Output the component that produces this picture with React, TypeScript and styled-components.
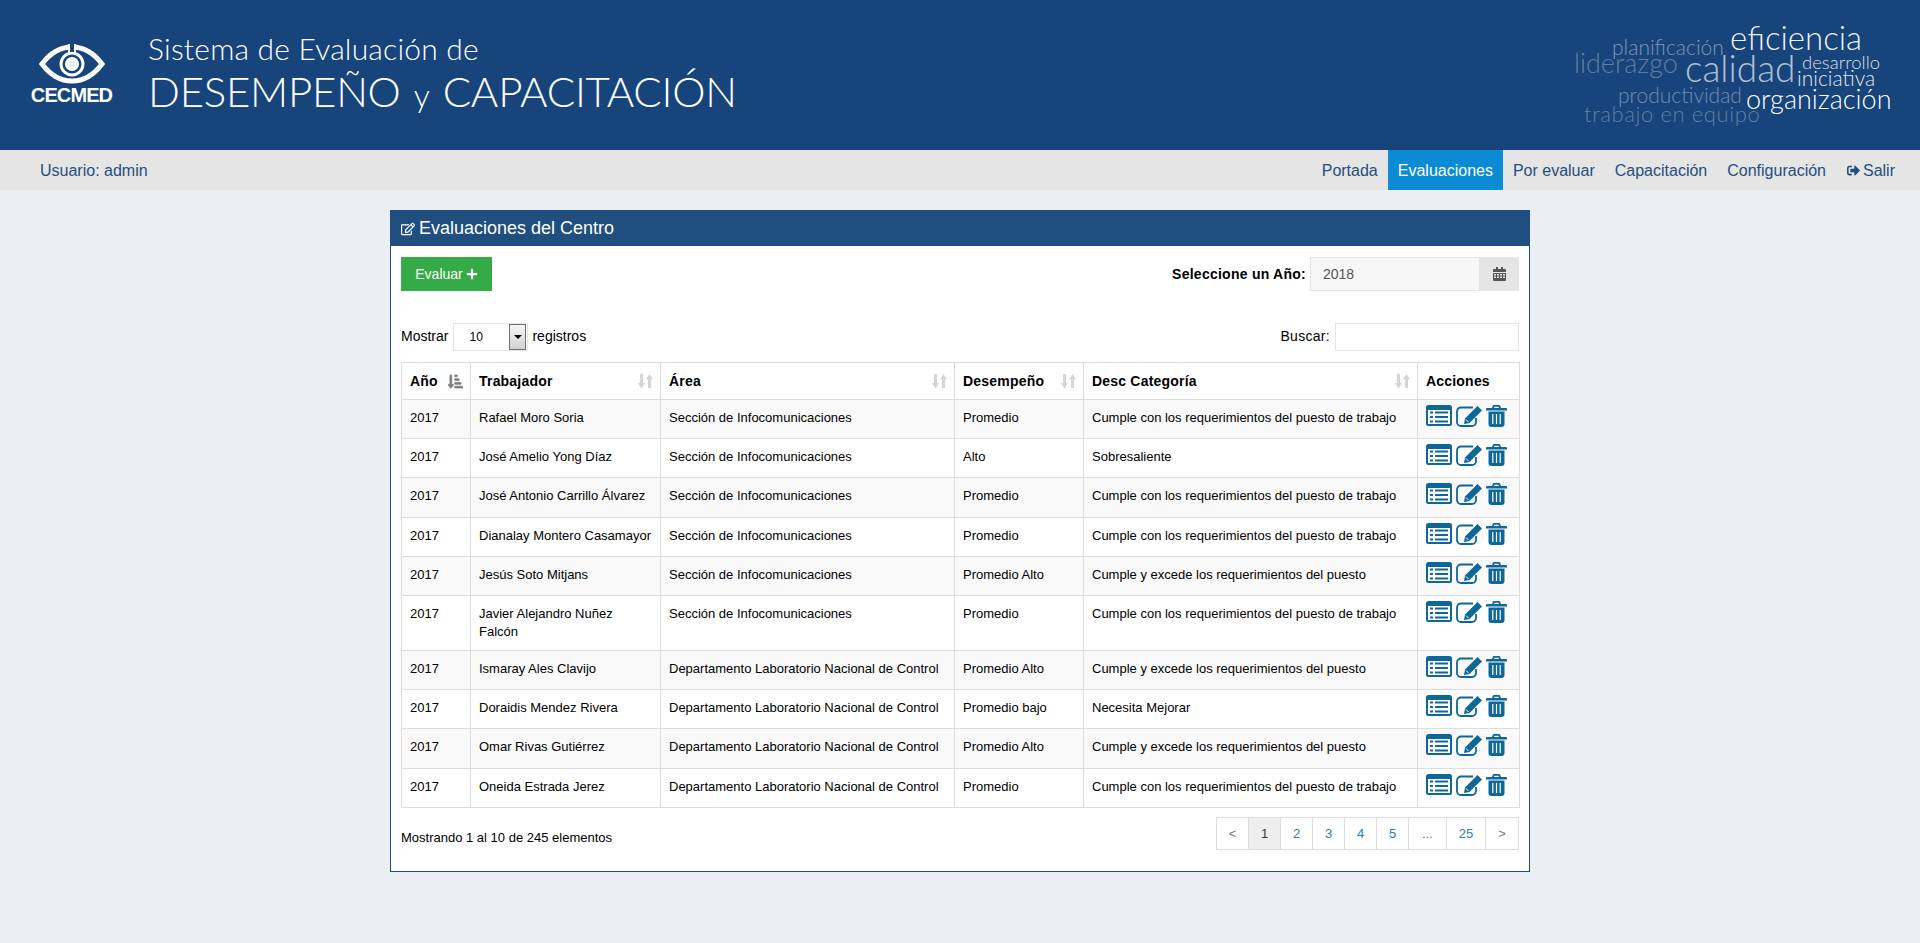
import React from "react";
import styled, { createGlobalStyle } from "styled-components";
import { FaPlus, FaRegEdit, FaSignOutAlt, FaSortAmountDownAlt } from "react-icons/fa";

const GlobalStyle = createGlobalStyle`
  html, body { margin: 0; padding: 0; }
  body {
    background: #ebeff4;
    color: #000;
    font-family: "Liberation Sans", Arial, sans-serif;
    font-size: 13px;
  }
`;

const Banner = styled.header`
  height: 150px;
  background: #17447b;
  display: flex;
  justify-content: space-between;
  color: #fff;
`;

const Brand = styled.div`
  display: flex;
  padding: 33px 0 0 30px;
`;

const Logo = styled.div`
  width: 83px;
  margin-right: 35px;
  padding-top: 11px;
  display: flex;
  flex-direction: column;
  align-items: center;
  svg { display: block; }
`;

const LogoName = styled.span`
  font-size: 20px;
  line-height: 18px;
  margin-top: 2px;
  font-weight: 700;
  letter-spacing: -0.9px;
`;

const Title = styled.div`
  font-family: Lato, sans-serif;
  font-weight: 300;
`;

const TitleTop = styled.div`
  font-size: 30px;
  line-height: 30px;
  letter-spacing: 0.2px;
`;

const TitleMain = styled.div`
  font-size: 42px;
  line-height: 48px;
  margin-top: 4px;
  letter-spacing: -0.25px;
  white-space: nowrap;
  small { font-size: 32px; margin: 0 2px; }
`;

const Cloud = styled.div`
  position: relative;
  width: 344px;
  height: 150px;
  font-family: Lato, sans-serif;
  font-weight: 300;
`;

const Word = styled.span<{ $x: number; $base: number; $size: number; $alpha: number; $track?: number }>`
  position: absolute;
  left: ${(p) => p.$x}px;
  top: ${(p) => p.$base - p.$size}px;
  font-size: ${(p) => p.$size}px;
  line-height: ${(p) => p.$size * 1.2}px;
  letter-spacing: ${(p) => p.$track ?? 0}px;
  color: rgba(255, 255, 255, ${(p) => p.$alpha});
  white-space: nowrap;
`;

const NavBar = styled.nav`
  height: 40px;
  background: #e5e5e5;
  display: flex;
  justify-content: space-between;
  align-items: stretch;
  padding: 0 15px 0 40px;
  font-size: 16px;
  color: #1f4e7f;
`;

const UserName = styled.span`
  line-height: 42px;
`;

const NavList = styled.div`
  display: flex;
`;

const NavItem = styled.a<{ $active?: boolean }>`
  padding: 1px 10px 0;
  line-height: 39px;
  display: flex;
  align-items: center;
  gap: 3px;
  background: ${(p) => (p.$active ? "#0b8bd3" : "transparent")};
  color: ${(p) => (p.$active ? "#fff" : "#1f4e7f")};
`;

const LogoutItem = styled(NavItem)`
  padding-left: 11px;
`;

const Panel = styled.section`
  width: 1140px;
  margin: 20px auto 0;
  box-sizing: border-box;
  height: 662px;
  background: #fff;
  border: 1px solid #1f4e7f;
`;

const PanelTitle = styled.h3`
  margin: 0;
  height: 35px;
  background: #1f4e7f;
  color: #fff;
  font-size: 18px;
  font-weight: 400;
  display: flex;
  align-items: center;
  gap: 4px;
  padding-left: 10px;
`;

const PanelBody = styled.div`
  padding: 11px 10px 0;
`;

const ToolRow = styled.div`
  display: flex;
  justify-content: space-between;
  height: 34px;
`;

const AddButton = styled.button`
  width: 91px;
  height: 34px;
  border: 0;
  background: #35ab47;
  color: #fff;
  font: 14px "Liberation Sans", Arial, sans-serif;
  display: flex;
  align-items: center;
  justify-content: center;
  gap: 3px;
  padding: 0;
`;

const YearPicker = styled.div`
  display: flex;
  align-items: center;
`;

const YearLabel = styled.label`
  font-size: 14px;
  font-weight: 700;
  letter-spacing: 0.25px;
  margin-right: 4px;
`;

const YearInput = styled.div`
  width: 169px;
  height: 34px;
  box-sizing: border-box;
  background: #f7f7f7;
  border: 1px solid #e5e5e5;
  border-right: 0;
  color: #555;
  font-size: 14px;
  line-height: 32px;
  padding-left: 12px;
`;

const YearAddon = styled.div`
  width: 40px;
  height: 34px;
  background: #e5e5e5;
  color: #555;
  display: flex;
  align-items: center;
  justify-content: center;
`;

const FilterRow = styled.div`
  display: flex;
  justify-content: space-between;
  align-items: flex-start;
  height: 28px;
  margin-top: 32px;
  font-size: 14px;
  line-height: 26px;
`;

const FilterGroup = styled.div`
  display: flex;
  align-items: flex-start;
  gap: 5px;
`;

const PageSize = styled.div`
  width: 75px;
  height: 28px;
  box-sizing: border-box;
  border: 1px solid #e5e5e5;
  display: flex;
  justify-content: space-between;
  align-items: center;
  padding-left: 15px;
  margin-right: -1px;
  font-size: 12px;
`;

const PageSizeArrow = styled.span`
  width: 17px;
  height: 26px;
  box-sizing: border-box;
  border: 1px solid #6f6f6f;
  margin-right: 1px;
  background: linear-gradient(#f5f5f5, #d2d2d2);
  display: flex;
  align-items: center;
  justify-content: center;
  &::after {
    content: "";
    border: 4px solid transparent;
    border-top-color: #000;
    border-bottom-width: 0;
  }
`;

const SearchLabel = styled.span`
  letter-spacing: 0.3px;
`;

const SearchInput = styled.div`
  width: 184px;
  height: 28px;
  box-sizing: border-box;
  border: 1px solid #e5e5e5;
`;

const Table = styled.table`
  width: 1118px;
  margin-top: 11px;
  border-collapse: collapse;
  table-layout: fixed;
`;

const HeadCell = styled.th<{ $width: number }>`
  width: ${(p) => p.$width}px;
  height: 37px;
  box-sizing: border-box;
  border: 1px solid #ddd;
  padding: 0 8px;
  text-align: left;
  font-size: 14px;
  letter-spacing: 0.2px;
  position: relative;
`;

const SortMark = styled.span<{ $on?: boolean }>`
  position: absolute;
  right: 7px;
  top: 11px;
  color: ${(p) => (p.$on ? "#7d7d7d" : "#d5d5d5")};
  display: flex;
  svg { stroke: currentColor; stroke-width: ${(p) => (p.$on ? 24 : 0)}; }
`;

const Row = styled.tr<{ $odd: boolean }>`
  background: ${(p) => (p.$odd ? "#f9f9f9" : "#fff")};
`;

const Cell = styled.td`
  height: 39.2px;
  box-sizing: border-box;
  border: 1px solid #ddd;
  padding: 9px 8px;
  font-size: 13px;
  line-height: 18px;
  vertical-align: top;
`;

const ActionCell = styled(Cell)`
  padding: 5px 0 0 8px;
`;

const Actions = styled.div`
  display: flex;
  align-items: flex-start;
  gap: 4px;
  color: #0f6797;
  height: 23px;
`;

const BottomRow = styled.div`
  display: flex;
  justify-content: space-between;
  margin-top: 9px;
`;

const PageInfo = styled.span`
  line-height: 18px;
  margin-top: 12px;
`;

const Pager = styled.div`
  display: flex;
  height: 33px;
  box-sizing: border-box;
  border: 1px solid #ddd;
`;

const PageLink = styled.a<{ $width: number; $current?: boolean; $muted?: boolean }>`
  width: ${(p) => p.$width}px;
  box-sizing: border-box;
  display: flex;
  align-items: center;
  justify-content: center;
  border-left: 1px solid #ddd;
  &:first-child { border-left: 0; }
  background: ${(p) => (p.$current ? "#eee" : "transparent")};
  color: ${(p) => (p.$current ? "#333" : p.$muted ? "#777" : "#337ab7")};
`;

const workers = [
  ["Rafael Moro Soria", "Sección de Infocomunicaciones", "Promedio", "Cumple con los requerimientos del puesto de trabajo"],
  ["José Amelio Yong Díaz", "Sección de Infocomunicaciones", "Alto", "Sobresaliente"],
  ["José Antonio Carrillo Álvarez", "Sección de Infocomunicaciones", "Promedio", "Cumple con los requerimientos del puesto de trabajo"],
  ["Dianalay Montero Casamayor", "Sección de Infocomunicaciones", "Promedio", "Cumple con los requerimientos del puesto de trabajo"],
  ["Jesús Soto Mitjans", "Sección de Infocomunicaciones", "Promedio Alto", "Cumple y excede los requerimientos del puesto"],
  ["Javier Alejandro Nuñez Falcón", "Sección de Infocomunicaciones", "Promedio", "Cumple con los requerimientos del puesto de trabajo"],
  ["Ismaray Ales Clavijo", "Departamento Laboratorio Nacional de Control", "Promedio Alto", "Cumple y excede los requerimientos del puesto"],
  ["Doraidis Mendez Rivera", "Departamento Laboratorio Nacional de Control", "Promedio bajo", "Necesita Mejorar"],
  ["Omar Rivas Gutiérrez", "Departamento Laboratorio Nacional de Control", "Promedio Alto", "Cumple y excede los requerimientos del puesto"],
  ["Oneida Estrada Jerez", "Departamento Laboratorio Nacional de Control", "Promedio", "Cumple con los requerimientos del puesto de trabajo"],
];

const columns = [
  { label: "Año", width: 69 },
  { label: "Trabajador", width: 190 },
  { label: "Área", width: 294 },
  { label: "Desempeño", width: 129 },
  { label: "Desc Categoría", width: 334 },
  { label: "Acciones", width: 102 },
];

const pages = [
  { label: "<", width: 31, muted: true },
  { label: "1", width: 32, current: true },
  { label: "2", width: 32 },
  { label: "3", width: 32 },
  { label: "4", width: 32 },
  { label: "5", width: 32 },
  { label: "...", width: 38, muted: true },
  { label: "25", width: 39 },
  { label: ">", width: 33, muted: true },
];

const words = [
  { text: "planificación", x: 36, base: 55, size: 21, alpha: 0.45 },
  { text: "eficiencia", x: 154, base: 51, size: 33, alpha: 0.95 },
  { text: "liderazgo", x: -2, base: 74, size: 27, alpha: 0.32 },
  { text: "calidad", x: 109, base: 83, size: 37, alpha: 0.68 },
  { text: "desarrollo", x: 226, base: 69, size: 18.5, alpha: 0.85 },
  { text: "iniciativa", x: 221, base: 86, size: 21, alpha: 0.9 },
  { text: "productividad", x: 42, base: 103, size: 21, alpha: 0.4 },
  { text: "organización", x: 170, base: 110, size: 27, alpha: 1 },
  { text: "trabajo en equipo", x: 8, base: 123, size: 22, alpha: 0.32, track: 0.6 },
];

const SortArrows = () => (
  <svg width="15" height="15" viewBox="0 0 15 15" fill="currentColor">
    <path d="M2 0h3v9h2l-3.500 5.500L0 9h2z" />
    <path d="M11.500 0L15 5.500h-2V14h-3V5.500H8z" />
  </svg>
);

const CalendarIcon = () => (
  <svg width="13" height="14" viewBox="0 0 13 14" fill="currentColor">
    <path d="M1 2h2V0h2v2h3V0h2v2h2a1 1 0 0 1 1 1v2H0V3a1 1 0 0 1 1-1z" />
    <path d="M0 6h13v7a1 1 0 0 1-1 1H1a1 1 0 0 1-1-1zm1 1v1.500h2V7zm3 0v1.500h2V7zm3 0v1.500h2V7zm3 0v1.500h2V7zM1 9.500V11h2V9.500zm3 0V11h2V9.500zm3 0V11h2V9.500zm3 0V11h2V9.500z" fillRule="evenodd" />
  </svg>
);

const EyeLogo = () => (
  <svg width="66" height="40" viewBox="0 0 66 40" fill="none" stroke="#fff">
    <path d="M3 20C12 8 21 3 33 3s21 5 30 17c-9 12-18 17-30 17S12 32 3 20z" strokeWidth="5" />
    <circle cx="33" cy="20" r="11" strokeWidth="3" />
    <circle cx="33" cy="20" r="7" fill="#fff" stroke="none" />
    <path d="M33 0v8" strokeWidth="5" stroke="#17447b" />
    <path d="M30 0v9M36 0v9" strokeWidth="2" />
  </svg>
);

const ListIcon = () => (
  <svg width="26" height="21" viewBox="0 0 26 21" fill="currentColor">
    <rect width="26" height="21" rx="2.500" />
    <rect x="2" y="5" width="22" height="14" fill="#fff" />
    <path d="M4 6.500h3v2H4zM9 6.500h13v2H9zM4 11h3v2H4zM9 11h13v2H9zM4 15.500h3v2H4zM9 15.500h13v2H9z" />
  </svg>
);

const EditIcon = () => (
  <svg width="26" height="22" viewBox="0 0 26 22" fill="none">
    <path d="M20 13v4a4 4 0 0 1-4 4H5a4 4 0 0 1-4-4V6.500a4 4 0 0 1 4-4h12" stroke="currentColor" strokeWidth="1.800" />
    <path d="M21.500 1L26 5.500 13.500 18 8 19l1-5.500z" fill="currentColor" />
    <path d="M10 14.500l2.500 2.500" stroke="#fff" strokeWidth="1" />
  </svg>
);

const TrashIcon = () => (
  <svg width="21" height="22" viewBox="0 0 21 22" fill="currentColor">
    <path d="M6 3l1-2.500a1 1 0 0 1 1-.5h5a1 1 0 0 1 1 .5L15 3h5a1 1 0 0 1 1 1v1.500H0V4a1 1 0 0 1 1-1zM8 3h5l-.6-1.300H8.600z" fillRule="evenodd" />
    <path d="M2.500 6.500h16V19a3 3 0 0 1-3 3h-10a3 3 0 0 1-3-3z" />
    <path d="M6.200 9h1.200v10H6.200zM9.900 9h1.200v10H9.900zM13.600 9h1.200v10h-1.200z" fill="#fff" />
  </svg>
);

export default function App() {
  return (
    <>
      <GlobalStyle />
      <Banner>
        <Brand>
          <Logo>
            <EyeLogo />
            <LogoName>CECMED</LogoName>
          </Logo>
          <Title>
            <TitleTop>Sistema de Evaluación de</TitleTop>
            <TitleMain>
              DESEMPEÑO <small>y</small> CAPACITACIÓN
            </TitleMain>
          </Title>
        </Brand>
        <Cloud>
          {words.map((w) => (
            <Word key={w.text} $x={w.x} $base={w.base} $size={w.size} $alpha={w.alpha} $track={w.track}>
              {w.text}
            </Word>
          ))}
        </Cloud>
      </Banner>
      <NavBar>
        <UserName>Usuario: admin</UserName>
        <NavList>
          <NavItem>Portada</NavItem>
          <NavItem $active>Evaluaciones</NavItem>
          <NavItem>Por evaluar</NavItem>
          <NavItem>Capacitación</NavItem>
          <NavItem>Configuración</NavItem>
          <LogoutItem>
            <FaSignOutAlt size={13} /> Salir
          </LogoutItem>
        </NavList>
      </NavBar>
      <Panel>
        <PanelTitle>
          <FaRegEdit size={14} /> Evaluaciones del Centro
        </PanelTitle>
        <PanelBody>
          <ToolRow>
            <AddButton>
              Evaluar <FaPlus size={12} />
            </AddButton>
            <YearPicker>
              <YearLabel>Seleccione un Año:</YearLabel>
              <YearInput>2018</YearInput>
              <YearAddon>
                <CalendarIcon />
              </YearAddon>
            </YearPicker>
          </ToolRow>
          <FilterRow>
            <FilterGroup>
              Mostrar
              <PageSize>
                10
                <PageSizeArrow />
              </PageSize>
              registros
            </FilterGroup>
            <FilterGroup>
              <SearchLabel>Buscar:</SearchLabel>
              <SearchInput />
            </FilterGroup>
          </FilterRow>
          <Table>
            <thead>
              <tr>
                {columns.map((c, i) => (
                  <HeadCell key={c.label} $width={c.width}>
                    {c.label}
                    {i === 0 && (
                      <SortMark $on>
                        <FaSortAmountDownAlt size={15} />
                      </SortMark>
                    )}
                    {i > 0 && i < 5 && (
                      <SortMark>
                        <SortArrows />
                      </SortMark>
                    )}
                  </HeadCell>
                ))}
              </tr>
            </thead>
            <tbody>
              {workers.map((w, i) => (
                <Row key={w[0]} $odd={i % 2 === 0}>
                  <Cell>2017</Cell>
                  {w.map((value) => (
                    <Cell key={value}>{value}</Cell>
                  ))}
                  <ActionCell>
                    <Actions>
                      <ListIcon />
                      <EditIcon />
                      <TrashIcon />
                    </Actions>
                  </ActionCell>
                </Row>
              ))}
            </tbody>
          </Table>
          <BottomRow>
            <PageInfo>Mostrando 1 al 10 de 245 elementos</PageInfo>
            <Pager>
              {pages.map((p) => (
                <PageLink key={p.label} $width={p.width} $current={p.current} $muted={p.muted}>
                  {p.label}
                </PageLink>
              ))}
            </Pager>
          </BottomRow>
        </PanelBody>
      </Panel>
    </>
  );
}
